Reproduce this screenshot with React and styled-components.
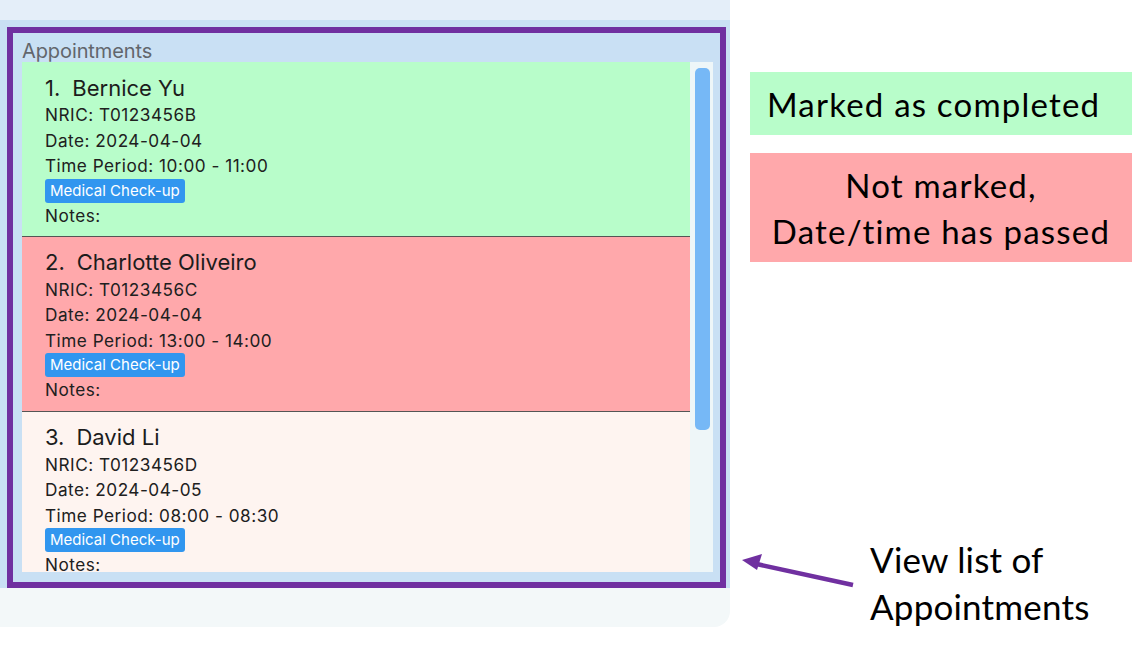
import React from 'react'
import styled, { createGlobalStyle } from 'styled-components'

const GlobalStyle = createGlobalStyle`
  html, body {
    margin: 0;
    padding: 0;
    background: #ffffff;
  }
`

const appointments = [
  {
    name: 'Bernice Yu',
    nric: 'T0123456B',
    date: '2024-04-04',
    time: '10:00 - 11:00',
    tag: 'Medical Check-up',
    status: 'done'
  },
  {
    name: 'Charlotte Oliveiro',
    nric: 'T0123456C',
    date: '2024-04-04',
    time: '13:00 - 14:00',
    tag: 'Medical Check-up',
    status: 'missed'
  },
  {
    name: 'David Li',
    nric: 'T0123456D',
    date: '2024-04-05',
    time: '08:00 - 08:30',
    tag: 'Medical Check-up',
    status: 'upcoming'
  }
]

const cardColors = {
  done: '#b8fdca',
  missed: '#ffa8ab',
  upcoming: '#fef4f0'
}

const Page = styled.div`
  display: flex;
  width: 1142px;
  height: 652px;
  overflow: hidden;
  background: #ffffff;
`

const AppPane = styled.div`
  display: flex;
  flex-direction: column;
  width: 730px;
  height: 627px;
  flex-shrink: 0;
  background: #f3f8f9;
  border-bottom-right-radius: 16px;
  overflow: hidden;
`

const TopStrip = styled.div`
  height: 20px;
  background: #e4eef9;
`

const PanelArea = styled.div`
  display: flex;
  height: 561px;
  padding: 7px 4px 0 7px;
  background: #c9e0f4;
`

const Frame = styled.div`
  flex: 1;
  display: flex;
  flex-direction: column;
  border: 6px solid #7030a0;
  padding: 0 7px 10px 9px;
  background: #c9e0f4;
`

const PanelTitle = styled.div`
  height: 29px;
  line-height: 36px;
  font-family: Inter, 'Liberation Sans', sans-serif;
  font-size: 20px;
  letter-spacing: -0.1px;
  color: #62666c;
`

const ListView = styled.div`
  flex: 1;
  display: flex;
  min-height: 0;
`

const Cards = styled.div`
  flex: 1;
  overflow: hidden;
`

const ScrollTrack = styled.div`
  width: 23px;
  padding: 6px 3px 0 5px;
  box-sizing: border-box;
  background: #eef6f8;
`

const ScrollThumb = styled.div`
  height: 362px;
  border-radius: 5px;
  background: #76b8f6;
`

const Card = styled.div`
  height: 174.75px;
  padding: 11.5px 0 0 23px;
  box-sizing: border-box;
  background: ${p => cardColors[p.$status]};
  border-bottom: 1.5px solid #555555;
  font-family: Inter, 'Liberation Sans', sans-serif;
  color: #202020;

  &:last-child {
    border-bottom: none;
  }
`

const NameRow = styled.div`
  display: flex;
  gap: 12px;
  font-size: 22px;
  line-height: 28.5px;
  color: #1c1c1c;
`

const Detail = styled.div`
  font-size: 17.2px;
  letter-spacing: 0.5px;
  line-height: 25.5px;
`

const Tag = styled.span`
  display: inline-block;
  height: 24px;
  line-height: 24px;
  padding: 0 5px;
  border-radius: 3px;
  background: #3196ef;
  color: #ffffff;
  font-size: 15px;
`

const Legend = styled.div`
  display: flex;
  flex-direction: column;
  width: 382px;
  padding: 72px 0 0 20px;
  font-family: Lato, 'Open Sans', sans-serif;
  color: #000000;
`

const LegendBox = styled.div`
  height: ${p => p.$height}px;
  margin-bottom: 18px;
  display: flex;
  flex-direction: column;
  justify-content: center;
  align-items: ${p => (p.$center ? 'center' : 'flex-start')};
  padding-left: ${p => (p.$center ? 0 : 17)}px;
  background: ${p => p.$bg};
  font-size: 33px;
  letter-spacing: 1.2px;
  line-height: 46px;
  white-space: nowrap;
`

const Callout = styled.div`
  display: flex;
  align-items: flex-start;
  margin: auto 0 22px -20px;
`

const Arrow = styled.svg`
  flex-shrink: 0;
  margin-top: 16px;
`

const CalloutText = styled.div`
  margin-left: 8px;
  font-size: 35px;
  letter-spacing: 0.2px;
  line-height: 47px;
`

export default function App() {
  return (
    <>
      <GlobalStyle />
      <Page>
        <AppPane>
          <TopStrip />
          <PanelArea>
            <Frame>
              <PanelTitle>Appointments</PanelTitle>
              <ListView>
                <Cards>
                  {appointments.map((a, i) => (
                    <Card key={a.nric} $status={a.status}>
                      <NameRow>
                        <span>{i + 1}.</span>
                        <span>{a.name}</span>
                      </NameRow>
                      <Detail>NRIC: {a.nric}</Detail>
                      <Detail>Date: {a.date}</Detail>
                      <Detail>Time Period: {a.time}</Detail>
                      <Tag>{a.tag}</Tag>
                      <Detail>Notes:</Detail>
                    </Card>
                  ))}
                </Cards>
                <ScrollTrack>
                  <ScrollThumb />
                </ScrollTrack>
              </ListView>
            </Frame>
          </PanelArea>
        </AppPane>

        <Legend>
          <LegendBox $height={63} $bg="#b8fdca">
            Marked as completed
          </LegendBox>
          <LegendBox $height={109} $bg="#ffa8ab" $center>
            <span>Not marked,</span>
            <span>Date/time has passed</span>
          </LegendBox>
          <Callout>
            <Arrow width="132" height="40" viewBox="0 0 132 40">
              <line x1="123" y1="33" x2="22" y2="11" stroke="#7030a0" strokeWidth="4.5" />
              <polygon points="12,8 32,2 27,18" fill="#7030a0" />
            </Arrow>
            <CalloutText>
              View list of
              <br />
              Appointments
            </CalloutText>
          </Callout>
        </Legend>
      </Page>
    </>
  )
}
